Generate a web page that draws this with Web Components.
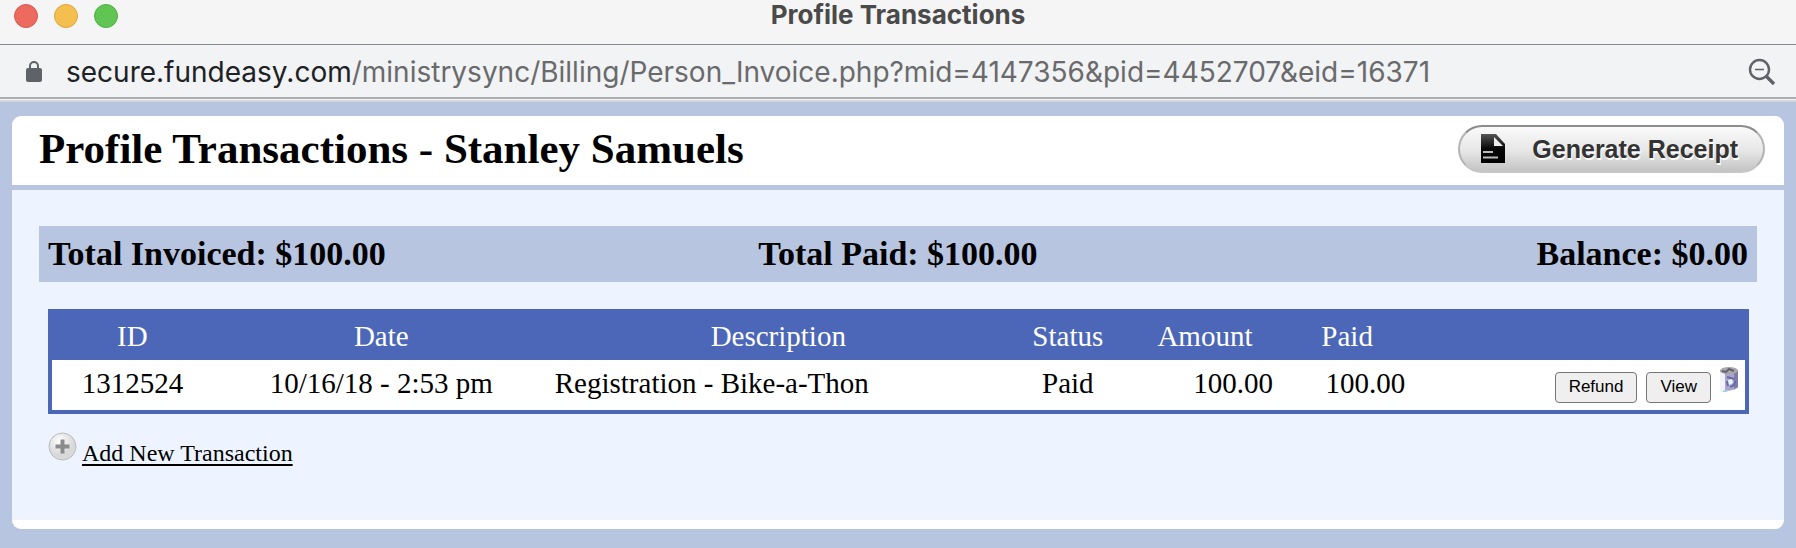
<!DOCTYPE html>
<html lang="en">
<head>
<meta charset="utf-8">
<title>Profile Transactions</title>
<style>
  html { min-height: 100%; background: #b8c5e0; }
  body { margin: 0; font-family: "Liberation Serif", "Times New Roman", serif; color: #000; }
</style>
</head>
<body>
<browser-window>
  <span slot="title">Profile Transactions</span>
  <span slot="host">secure.fundeasy.com</span>
  <span slot="path">/ministrysync/Billing/Person_Invoice.php?mid=4147356&amp;pid=4452707&amp;eid=16371</span>
  <invoice-panel>
    <span slot="heading">Profile Transactions - Stanley Samuels</span>
    <receipt-button slot="action">Generate Receipt</receipt-button>
    <totals-bar>
      <span slot="invoiced">Total Invoiced: $100.00</span>
      <span slot="paid">Total Paid: $100.00</span>
      <span slot="balance">Balance: $0.00</span>
    </totals-bar>
    <transaction-table></transaction-table>
    <add-link>Add New Transaction</add-link>
  </invoice-panel>
</browser-window>

<script>
const define = (name, html) => {
  const template = document.createElement('template');
  template.innerHTML = html;
  customElements.define(name, class extends HTMLElement {
    constructor() {
      super();
      this.attachShadow({ mode: 'open' }).append(template.content.cloneNode(true));
    }
  });
};

define('browser-window', `
  <style>
    :host { display: block; }
    .titlebar { display: grid; grid-template-columns: 1fr auto 1fr; align-items: start; height: 44px;
      padding: 0 14px; background: #f5f5f5; border-bottom: 1px solid #8a8a8a; box-sizing: content-box; }
    .lights { display: flex; gap: 16px; padding-top: 4px; }
    .lights i { width: 24px; height: 24px; border-radius: 50%; box-sizing: border-box; border: 1px solid var(--rim); }
    .red { background: #ed6a5e; --rim: #d9594e; }
    .amber { background: #f5bf4f; --rim: #dba541; }
    .green { background: #61c554; --rim: #52ad46; }
    .title { font: 700 26px/30px Inter, sans-serif; color: #4a4a4a; }
    .address { display: flex; align-items: center; height: 50px; padding: 2px 20px 0 26px; background: #f1f3f4;
      border-bottom: 2px solid #acadb0; font: 400 28px/50px Inter, sans-serif; color: #6a6a6c; white-space: nowrap; }
    .lock { margin-right: 24px; }
    .url { flex: 1; }
    .host { color: #202124; }
    .shade { height: 2px; border-top: 1px solid #f4f4f4; background: #d5d6da; }
    svg { display: block; flex: none; }
  </style>
  <header class="titlebar">
    <div class="lights"><i class="red"></i><i class="amber"></i><i class="green"></i></div>
    <div class="title"><slot name="title"></slot></div>
  </header>
  <div class="address">
    <svg class="lock" width="16" height="22" viewBox="0 0 16 22">
      <rect x="0" y="7" width="16" height="14" rx="2" fill="#5f6368"/>
      <path d="M4 8V5a4 4 0 0 1 8 0v3" fill="none" stroke="#5f6368" stroke-width="2"/>
    </svg>
    <div class="url"><span class="host"><slot name="host"></slot></span><slot name="path"></slot></div>
    <svg width="28" height="28" viewBox="0 0 28 28" fill="none" stroke="#5f6368">
      <circle cx="11.500" cy="11.500" r="9.500" stroke-width="2.400"/>
      <path d="M7 11.500h9" stroke-width="1.500"/>
      <path d="M18.500 18.500L26 26" stroke-width="3.400"/>
    </svg>
  </div>
  <div class="shade"></div>
  <slot></slot>
`);

define('invoice-panel', `
  <style>
    :host { display: block; margin: 14px 12px 19px; background: #fff; border-radius: 9px; overflow: hidden; }
    header { display: flex; align-items: center; justify-content: space-between; height: 65px;
      padding: 0 19px 4px 27px; border-bottom: 5px solid #b8c5e0; }
    h1 { margin: 0; font-size: 43px; line-height: 48px; font-weight: 700; }
    main { background: #edf4ff; padding: 36px 27px 53px; margin-bottom: 9px; }
  </style>
  <header><h1><slot name="heading"></slot></h1><slot name="action"></slot></header>
  <main><slot></slot></main>
`);

define('receipt-button', `
  <style>
    :host { display: block; }
    button { display: flex; align-items: center; gap: 27px; height: 48px; margin: 0; padding: 0 25px 0 21px;
      border: 2px solid #b4b4b4; border-top-color: #8c8c8c; border-bottom-color: #c6c6c6; border-radius: 24px;
      background: linear-gradient(#fafafa, #e6e6e6 55%, #c4c4c4);
      font: 700 25px/30px "Liberation Sans", Arial, sans-serif; color: #333; text-shadow: 1px 2px 0 #fff; }
    svg { display: block; }
  </style>
  <button type="button">
    <svg width="24" height="30" viewBox="0 0 24 30">
      <defs><linearGradient id="ink" x1="0" y1="0" x2="0" y2="1">
        <stop offset="0" stop-color="#555"/><stop offset=".5" stop-color="#080808"/><stop offset="1" stop-color="#000"/>
      </linearGradient></defs>
      <path d="M0 0h15l9 10v19H0z" fill="url(#ink)"/>
      <path d="M13 3v9h9z" fill="#eee"/>
      <path d="M2 18h10M2 23.500h15" stroke="#bbb" stroke-width="2"/>
    </svg>
    <slot></slot>
  </button>
`);

define('totals-bar', `
  <style>
    :host { display: grid; grid-template-columns: 1fr 1fr 1fr; padding: 8px 9px; background: #b8c5e0;
      font-size: 34px; line-height: 40px; font-weight: 700; }
    .middle { text-align: center; }
    .end { text-align: right; }
  </style>
  <div><slot name="invoiced"></slot></div>
  <div class="middle"><slot name="paid"></slot></div>
  <div class="end"><slot name="balance"></slot></div>
`);

define('transaction-table', `
  <style>
    :host { display: block; margin: 27px 8px 0 9px; }
    table { width: 100%; table-layout: fixed; border: 4px solid #4c67b8; border-collapse: separate; border-spacing: 0;
      background: #fff; font-size: 29px; line-height: 32px; }
    th, td { box-sizing: border-box; vertical-align: middle; text-align: center; }
    th { height: 47px; padding: 0 8px 1px; background: #4c67b8; color: #fff; font-weight: 400; }
    td { height: 50px; padding: 0 8px 5px; }
    .text { text-align: left; padding-left: 5px; }
    .number { text-align: right; }
    .id { width: 9.500%; } .date { width: 19.900%; } .desc { width: 27%; } .status { width: 7.200%; }
    .amount { width: 9%; } .paid { width: 7.800%; }
    .actions { padding: 0 7px 1px; }
    .tools { display: flex; justify-content: flex-end; gap: 9px; align-items: flex-end; height: 36px; }
    button { height: 31px; margin: 0; padding: 0 13px; border: 1px solid #767676; border-radius: 4px; background: #efefef;
      font: 17px/20px "Liberation Sans", Arial, sans-serif; color: #000; }
    .delete { display: block; align-self: flex-start; height: 26px; padding: 0; border: 0; background: none; }
    svg { display: block; }
  </style>
  <table>
    <colgroup><col class="id"><col class="date"><col class="desc"><col class="status"><col class="amount"><col class="paid"><col></colgroup>
    <thead><tr><th>ID</th><th>Date</th><th>Description</th><th>Status</th><th>Amount</th><th>Paid</th><th></th></tr></thead>
    <tbody><tr>
      <td>1312524</td><td>10/16/18 - 2:53 pm</td><td class="text">Registration - Bike-a-Thon</td><td>Paid</td>
      <td class="number">100.00</td><td class="number">100.00</td>
      <td class="actions"><div class="tools">
        <button type="button">Refund</button>
        <button type="button">View</button>
        <button type="button" class="delete" aria-label="Delete">
          <svg width="18" height="26" viewBox="0 0 18 26">
            <path d="M0 3v20q2 2 5 1.500l10-2 3-2V3z" fill="#aaa6cc"/>
            <path d="M0 5v19q3 1 5 0V7z" fill="#f1f3f8"/>
            <path d="M14 6l4-2v16l-4 2z" fill="#7f7bab"/>
            <ellipse cx="9" cy="3.500" rx="9" ry="3.500" fill="#aaa8ad"/>
            <path d="M2 4l4 1 3-3 5 2" stroke="#66636c" stroke-width="2" fill="none"/>
            <path d="M7 10l7 2M15 14q0 5-5 6M8 19l-1-5" fill="none" stroke="#6668a8" stroke-width="2"/>
            <path d="M8 13l4-1 1 4-4 2z" fill="#e8f4fb"/>
            <path d="M3 24.500l5-1" stroke="#9ad0dc" stroke-width="1.500"/>
          </svg>
        </button>
      </div></td>
    </tr></tbody>
  </table>
`);

define('add-link', `
  <style>
    :host { display: flex; margin: 18px 9px 0; }
    a { display: flex; align-items: flex-start; gap: 4px; color: #000; font-size: 24px; line-height: 28px; text-decoration: none; }
    span { margin-top: 7px; text-decoration: underline; text-decoration-thickness: 2px; text-underline-offset: 3px; }
    svg { display: block; }
  </style>
  <a href="#add">
    <svg width="30" height="29" viewBox="0 0 30 29">
      <defs><radialGradient id="disc" cx=".4" cy=".3"><stop offset="0" stop-color="#fff"/><stop offset="1" stop-color="#d9d9d9"/></radialGradient></defs>
      <circle cx="14.500" cy="14.500" r="13.500" fill="url(#disc)" stroke="#bdbdbd"/>
      <path d="M14.500 7.500v14M7.500 14.500h14" stroke="#8b8b8b" stroke-width="4"/>
    </svg>
    <span><slot></slot></span>
  </a>
`);
</script>
</body>
</html>
